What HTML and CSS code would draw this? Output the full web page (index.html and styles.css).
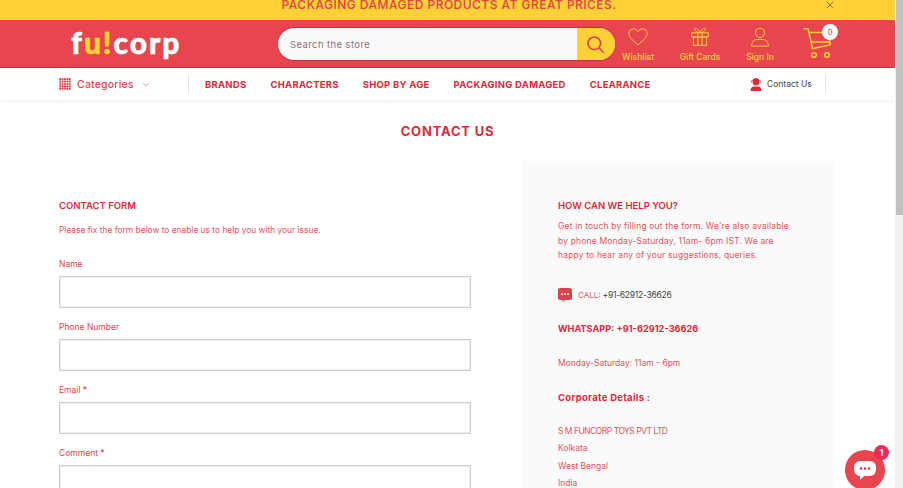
FILE: index.html
```html
<!DOCTYPE html>
<html>
<head>
    <meta charset="utf-8">
    <meta name="viewport" content="width=device-width, initial-scale=1">
    <title>Contact Us</title>
    <link rel="stylesheet" href="styles.css">
</head>
<body>

<div class="page">
    <div class="announce">
        <p>PACKAGING DAMAGED PRODUCTS AT GREAT PRICES.</p>
        <svg class="announce-close" viewBox="0 0 10 10"><path d="M1 1l8 8M9 1l-8 8"/></svg>
    </div>

    <header class="header">
        <a class="logo" href="#">f<span>u!</span>corp</a>

        <form class="search">
            <span class="search-text">Search the store</span>
            <span class="search-btn">
                <svg viewBox="0 0 24 24"><circle cx="10.5" cy="10.5" r="8"/><path d="M16.5 16.5l6 6"/></svg>
            </span>
        </form>

        <a class="head-link wish" href="#">
            <svg viewBox="0 0 24 22"><path d="M12 20.500C7 16 1 12 1 6.800 1 3.500 3.500 1.200 6.400 1.200c2.300 0 4.400 1.300 5.600 3.500 1.200-2.200 3.300-3.500 5.600-3.500 2.900 0 5.400 2.300 5.400 5.600C23 12 17 16 12 20.500z"/></svg>
            Wishlist
        </a>
        <a class="head-link gift" href="#">
            <svg viewBox="0 0 24 24"><path d="M2 7h20v5H2zM4 12h16v10H4zM9.500 7v15M14.500 7v15M12 7C10 3 8 1 6.500 1.500S5 6 12 7zM12 7c2-4 4-6 5.500-5.500S19 6 12 7z"/></svg>
            Gift Cards
        </a>
        <a class="head-link sign" href="#">
            <svg viewBox="0 0 24 24"><circle cx="12" cy="7" r="5.500"/><path d="M2 23c0-5 3-8 6.500-8h7c3.500 0 6.500 3 6.500 8z"/></svg>
            Sign In
        </a>
        <a class="cart" href="#">
            <svg viewBox="0 0 32 32"><path d="M.5.700H5L9.500 20.500 27 17V5M6 4.500h21M8 14h19"/><circle cx="11" cy="27" r="2.300"/><circle cx="24" cy="27" r="2.300"/></svg>
            <span class="cart-count">0</span>
        </a>
    </header>

    <nav class="nav">
        <a class="cat" href="#">
            <svg class="cat-icon" viewBox="0 0 12 12"><path d="M1.200 1.200h10M1.200 3.600h10M1.200 6h10M1.200 8.400h10M1.200 10.800h10"/></svg>
            Categories
            <svg class="cat-arrow" viewBox="0 0 10 6"><path d="M1 1l4 4 4-4"/></svg>
        </a>
        <div class="nav-links">
            <a href="#">BRANDS</a>
            <a href="#">CHARACTERS</a>
            <a href="#">SHOP BY AGE</a>
            <a href="#">PACKAGING DAMAGED</a>
            <a href="#">CLEARANCE</a>
        </div>
        <a class="nav-contact" href="#">
            <svg viewBox="0 0 12 13"><circle cx="6" cy="4" r="3.400"/><path d="M.5 13c0-3 1.500-4.500 3.500-4.500h4c2 0 3.500 1.500 3.500 4.500z"/><path class="band" d="M1.500 4.500C1.500-.5 10.500-.5 10.500 4.500"/></svg>
            Contact Us
        </a>
    </nav>

    <h1 class="title">CONTACT US</h1>

    <main class="content">
        <section class="form-col">
            <h2>CONTACT FORM</h2>
            <p class="form-note">Please fix the form below to enable us to help you with your issue.</p>
            <label>Name</label>
            <div class="field"></div>
            <label>Phone Number</label>
            <div class="field"></div>
            <label>Email *</label>
            <div class="field"></div>
            <label>Comment *</label>
            <div class="field"></div>
        </section>

        <aside class="help">
            <h2 class="help-title">HOW CAN WE HELP YOU?</h2>
            <p class="help-text">Get in touch by filling out the form. We're also available by phone Monday-Saturday, 11am- 6pm IST. We are happy to hear any of your suggestions, queries.</p>
            <p class="call">
                <svg viewBox="0 0 14 14"><path d="M2 0h10a2 2 0 0 1 2 2v8a2 2 0 0 1-2 2H7l-2.500 2V12H2a2 2 0 0 1-2-2V2a2 2 0 0 1 2-2z"/><circle class="dot" cx="4" cy="6" r="1"/><circle class="dot" cx="7" cy="6" r="1"/><circle class="dot" cx="10" cy="6" r="1"/></svg>
                CALL: <span>+91-62912-36626</span>
            </p>
            <h3 class="whatsapp">WHATSAPP: +91-62912-36626</h3>
            <p class="hours">Monday-Saturday: 11am - 6pm</p>
            <h3 class="corp">Corporate Details :</h3>
            <p class="address"><span>S M FUNCORP TOYS PVT LTD</span><br>Kolkata<br>West Bengal<br>India</p>
        </aside>
    </main>
</div>

<div class="scrollbar"><div class="thumb"></div></div>

<div class="chat">
    <svg viewBox="0 0 24 24"><path d="M7 3h10a6 6 0 0 1 6 6v3a6 6 0 0 1-6 6h-6l-4 4v-4a6 6 0 0 1-6-6V9a6 6 0 0 1 6-6z"/><circle class="dot" cx="8" cy="10.500" r="1.200"/><circle class="dot" cx="12" cy="10.500" r="1.200"/><circle class="dot" cx="16" cy="10.500" r="1.200"/></svg>
    <span class="chat-badge">1</span>
</div>

</body>
</html>
```

FILE: styles.css
```css
* {
    box-sizing: border-box;
}

html, body {
    height: 100%;
}

body {
    font-family: Inter, "Liberation Sans", sans-serif;
    margin: 0;
    display: flex;
    overflow: hidden;
    background-color: #fff;
    color: #dd2a3b;
}

a {
    color: inherit;
    text-decoration: none;
}

.page {
    flex: 1;
    min-width: 0;
    height: 100%;
    overflow: hidden;
}

.scrollbar {
    width: 8px;
    padding-left: 1px;
    background-color: #f1f1f1;
}

.thumb {
    height: 215px;
    background-color: #c1c1c1;
}

/* top strip */
.announce {
    height: 20px;
    padding-left: 3px;
    background-color: #fed136;
    border-bottom: 1px solid #fbe46c;
    display: flex;
    justify-content: center;
    align-items: flex-start;
    position: relative;
}

.announce p {
    margin: 0;
    font-size: 12px;
    font-weight: 500;
    line-height: 10px;
    letter-spacing: 0.48px;
    color: #e2404b;
}

.announce-close {
    position: absolute;
    left: 826px;
    top: 1px;
    width: 8px;
    height: 8px;
    fill: none;
    stroke: #8a5a2c;
    stroke-width: 1;
}

/* red header */
.header {
    height: 48px;
    background-color: #e9454f;
    border-bottom: 1px solid #d92a3c;
    display: flex;
    align-items: center;
    padding-left: 71px;
}

.logo {
    width: 207px;
    margin-top: -3px;
    font-family: Lato, sans-serif;
    font-size: 30px;
    font-weight: 900;
    line-height: 30px;
    letter-spacing: 2px;
    color: #fff;
    -webkit-text-stroke: 0.6px #fff;
}

.logo span {
    color: #fed136;
    -webkit-text-stroke: 0.6px #fed136;
}

.search {
    width: 337px;
    height: 32px;
    margin-top: 1px;
    display: flex;
    align-items: center;
    background-color: #fafafa;
    border-radius: 17px;
    box-shadow: 0 -1px 0 #c9303f, 0 1px 0 #c9303f;
    overflow: hidden;
}

.search-text {
    flex: 1;
    padding-left: 12px;
    font-size: 9.500px;
    letter-spacing: 0.4px;
    color: #8d7078;
}

.search-btn {
    width: 38px;
    height: 100%;
    display: flex;
    align-items: center;
    justify-content: center;
    background-color: #fed136;
}

.search-btn svg {
    width: 19px;
    height: 19px;
    margin-left: -1px;
    fill: none;
    stroke: #e2404b;
    stroke-width: 2;
}

.head-link {
    display: flex;
    flex-direction: column;
    align-items: center;
    justify-content: flex-start;
    margin-top: 2px;
    font-size: 8.500px;
    font-weight: 500;
    line-height: 11px;
    color: #fed136;
    white-space: nowrap;
}

.head-link svg {
    width: 20px;
    height: 20px;
    margin-bottom: 5px;
    fill: none;
    stroke: #fed136;
    stroke-width: 1.200;
}

.wish {
    width: 44px;
    margin-left: 1px;
}

.gift {
    width: 62px;
    margin-left: 9px;
}

.sign {
    width: 44px;
    margin-left: 7px;
}

.cart {
    position: relative;
    width: 32px;
    height: 32px;
    margin-left: 21px;
    margin-top: 1px;
}

.cart svg {
    width: 32px;
    height: 32px;
    fill: none;
    stroke: #fed136;
    stroke-width: 1.500;
}

.cart-count {
    position: absolute;
    top: -4px;
    right: -3px;
    width: 16px;
    height: 16px;
    border-radius: 50%;
    background-color: #fff;
    color: #e9454f;
    font-size: 8px;
    line-height: 16px;
    text-align: center;
}

/* white nav row */
.nav {
    height: 32px;
    display: flex;
    align-items: center;
    padding: 0 69px 0 59px;
    background-color: #fff;
    box-shadow: 0 2px 4px rgba(0, 0, 0, 0.05);
}

.cat {
    width: 130px;
    height: 20px;
    display: flex;
    align-items: center;
    font-size: 10.500px;
    font-weight: 500;
    letter-spacing: 0.2px;
    color: #e9454f;
    border-right: 1px solid #e4e4e4;
}

.cat-icon {
    width: 12px;
    height: 12px;
    margin-right: 6px;
    fill: none;
    stroke: #e9454f;
    stroke-width: 2.200;
    stroke-linecap: round;
    stroke-dasharray: 0 2.400;
}

.cat-arrow {
    width: 8px;
    height: 5px;
    margin-left: 8px;
    fill: none;
    stroke: #e9858c;
    stroke-width: 1;
}

.nav-links {
    display: flex;
    gap: 24px;
    margin-left: 16px;
}

.nav-links a {
    font-size: 9.500px;
    font-weight: 700;
    letter-spacing: 0.25px;
    color: #dd2a3b;
    white-space: nowrap;
}

.nav-contact {
    width: 76px;
    height: 18px;
    margin-left: auto;
    display: flex;
    align-items: center;
    font-size: 8.500px;
    color: #444;
    border-right: 1px solid #e4e4e4;
}

.nav-contact svg {
    width: 12px;
    height: 13px;
    margin-right: 5px;
    fill: #dd2a3b;
}

.nav-contact .band {
    fill: none;
    stroke: #dd2a3b;
    stroke-width: 1;
}

/* page body */
.title {
    margin: 23px 0 0;
    height: 38px;
    text-align: center;
    font-size: 13px;
    font-weight: 700;
    letter-spacing: 0.8px;
    line-height: 16px;
    color: #dd2a3b;
}

.content {
    display: flex;
    padding-left: 59px;
}

.form-col {
    width: 412px;
    padding-top: 39px;
}

h2 {
    margin: 0;
    font-size: 9.500px;
    font-weight: 600;
    line-height: 12px;
    color: #dd2a3b;
}

.form-note {
    margin: 12px 0 0;
    font-size: 8.400px;
    line-height: 12px;
    color: #e9525c;
}

label {
    display: block;
    font-size: 8.500px;
    line-height: 12px;
    color: #e2404b;
}

.form-note + label {
    margin-top: 22px;
}

.field {
    height: 32px;
    margin-top: 6px;
    border: 1px solid #cfcfcf;
    box-shadow: inset 0 0 0 1px #eee;
    background-color: #fff;
}

.field + label {
    margin-top: 13px;
}

.help {
    width: 312px;
    height: 400px;
    margin-left: 51px;
    padding: 39px 36px 0;
    background-color: #fafafa;
}

.help-text {
    margin: 7px 0 0;
    font-size: 8.500px;
    line-height: 14.700px;
    letter-spacing: 0.17px;
    color: #e9525c;
}

.call {
    display: flex;
    align-items: center;
    margin: 25px 0 0;
    font-size: 8px;
    line-height: 14px;
    color: #e9525c;
}

.call svg {
    width: 14px;
    height: 14px;
    margin-right: 6px;
    fill: #e2404b;
}

.call .dot {
    fill: #fff;
}

.call span {
    margin-left: 2px;
    font-size: 8.500px;
    letter-spacing: -0.25px;
    color: #444;
}

h3 {
    margin: 0;
    font-size: 9.500px;
    font-weight: 700;
    line-height: 12px;
    letter-spacing: 0.3px;
    color: #dd2a3b;
}

.whatsapp {
    margin-top: 21px;
    font-size: 9.200px;
    letter-spacing: 0;
}

.hours {
    margin: 22px 0 0;
    font-size: 8.500px;
    line-height: 12px;
    color: #e9525c;
}

.corp {
    margin-top: 23px;
}

.address {
    margin: 19px 0 0;
    font-size: 8.500px;
    line-height: 17.300px;
    color: #e9525c;
}

.address span {
    letter-spacing: -0.5px;
}

/* chat bubble */
.chat {
    position: absolute;
    left: 845px;
    top: 450px;
    width: 40px;
    height: 40px;
    display: flex;
    align-items: center;
    justify-content: center;
    border-radius: 50%;
    background-color: #e9454f;
}

.chat svg {
    width: 24px;
    height: 24px;
    fill: #fff;
}

.chat .dot {
    fill: #dd2a3b;
}

.chat-badge {
    position: absolute;
    top: -5px;
    right: -4px;
    width: 15px;
    height: 15px;
    border-radius: 50%;
    background-color: #ec2a55;
    color: #fff;
    font-size: 9px;
    font-weight: 700;
    line-height: 15px;
    text-align: center;
}
```
